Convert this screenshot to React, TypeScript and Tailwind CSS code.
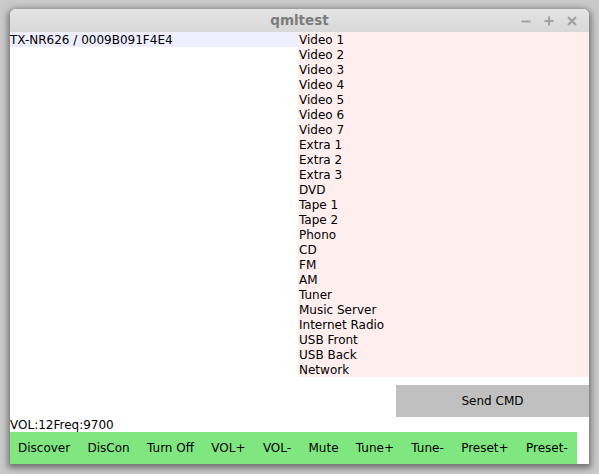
const inputs = [
  'Video 1', 'Video 2', 'Video 3', 'Video 4', 'Video 5', 'Video 6', 'Video 7',
  'Extra 1', 'Extra 2', 'Extra 3', 'DVD', 'Tape 1', 'Tape 2', 'Phono', 'CD',
  'FM', 'AM', 'Tuner', 'Music Server', 'Internet Radio', 'USB Front', 'USB Back', 'Network',
]

const buttons = ['Discover', 'DisCon', 'Turn Off', 'VOL+', 'VOL-', 'Mute', 'Tune+', 'Tune-', 'Preset+', 'Preset-']

function TitleBar() {
  return (
    <div className="relative flex h-[23px] shrink-0 items-center justify-center rounded-t-[6px] bg-gradient-to-b from-[#e4e4e4] to-[#d8d8d8]">
      <span className="text-[13.5px] font-bold text-[#7c7c7c]">qmltest</span>
      <div className="absolute right-[12px] top-[7px] flex items-center gap-[13px]">
        {/* minimize */}
        <svg width="10" height="10" viewBox="0 0 10 10">
          <path d="M0.5 5.5h9" stroke="#a0a0a0" strokeWidth="2" />
        </svg>
        {/* maximize */}
        <svg width="10" height="10" viewBox="0 0 10 10">
          <path d="M0.5 5h9M5 0.5v9" stroke="#a0a0a0" strokeWidth="2" />
        </svg>
        {/* close */}
        <svg width="10" height="10" viewBox="0 0 10 10">
          <path d="M1 1l8 8M9 1l-8 8" stroke="#a0a0a0" strokeWidth="2.2" />
        </svg>
      </div>
    </div>
  )
}

export default function App() {
  return (
    <div
      className="h-[474px] w-[599px] overflow-hidden bg-[#c9c9c9] pl-[10px] pt-[9px] text-[12px] leading-[17px] text-black"
      style={{ fontFamily: '"DejaVu Sans", sans-serif' }}
    >
      <div className="flex h-[455px] w-[579px] flex-col rounded-t-[6px] bg-white shadow-[0_2px_6px_2px_rgba(0,0,0,0.45)]">
        <TitleBar />

        <div className="flex flex-1 flex-col">
          {/* device list + input list */}
          <div className="flex">
            <div className="w-[288px]">
              <div className="h-[15px] bg-[#eeeeff]">TX-NR626 / 0009B091F4E4</div>
            </div>
            <div className="w-[291px] bg-[#ffeeee] pl-[1px]">
              {inputs.map((name) => (
                <div key={name} className="h-[15px]">
                  {name}
                </div>
              ))}
            </div>
          </div>

          <div className="mt-[8px] flex justify-end">
            <div className="flex h-[32px] w-[193px] items-center justify-center bg-[#c0c0c0] leading-[15px]">Send CMD</div>
          </div>

          <div className="h-[15px]">VOL:12Freq:9700</div>

          <div className="flex h-[32px] self-start bg-[#80e680] leading-[15px]">
            {buttons.map((label) => (
              <div key={label} className="flex items-center pl-[8px] pr-[9.35px]">
                {label}
              </div>
            ))}
          </div>
        </div>
      </div>
    </div>
  )
}
